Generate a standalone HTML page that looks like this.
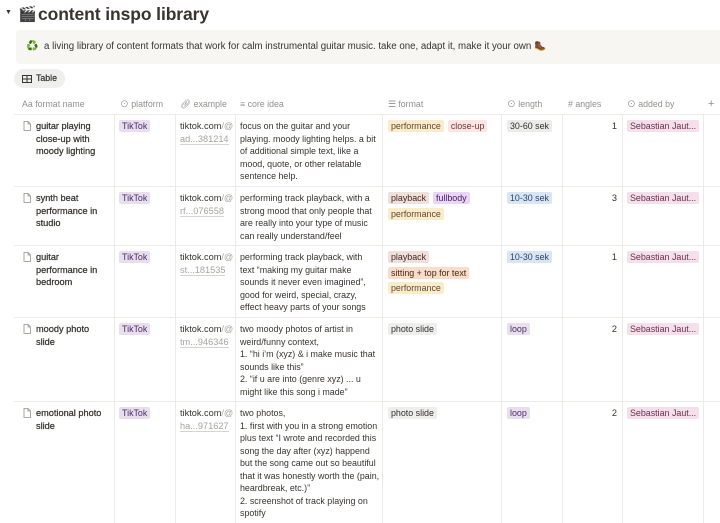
<!DOCTYPE html>
<html><head><meta charset="utf-8"><style>
*{margin:0;padding:0;box-sizing:border-box}
body{width:720px;height:523px;overflow:hidden;background:#fff;font-family:"Liberation Sans","Noto Sans CJK SC",sans-serif;color:#37352f;position:relative}
.abs{position:absolute}
.title{left:38px;top:4px;font-size:17.5px;font-weight:bold;white-space:nowrap;letter-spacing:-0.1px}
.callout{left:16px;top:30px;width:710px;height:34px;background:#f7f6f3;border-radius:4px;font-size:9.7px;line-height:34px;padding-left:28px;white-space:nowrap}
.btn{left:14px;top:69px;width:51px;height:19px;background:#efefed;border-radius:10px;font-size:8.8px;line-height:19px;padding-left:22px;-webkit-text-stroke:0.2px #37352f}
.hdr{top:95px;height:19px;font-size:8.8px;color:#91908b;line-height:19px;white-space:nowrap}
.hl{left:14px;width:706px;height:1px;background:#ebeae7}
.vl{width:1px;background:#ebeae7;top:114px;height:409px}
.cell{font-size:9.2px;line-height:12.5px;white-space:nowrap}
.ci{font-size:8.9px}
.nm{-webkit-text-stroke:0.25px #37352f}
.tg{display:flex;flex-wrap:wrap;row-gap:3.5px;column-gap:4px;align-items:flex-start}
.tag{display:block;height:12px;line-height:12px;padding:0 3px;border-radius:2px;font-size:8.9px;white-space:nowrap}
.tk{background:#e8deee;color:#492f64}
.perf{background:#f9ecc8;color:#64473a}
.cu{background:#fbe4e4;color:#6e3630}
.pb{background:#eee0da;color:#442a1e}
.fb{background:#ead4f9;color:#412454}
.sit{background:#f8ddcc;color:#49290e}
.ps{background:#eeeeed;color:#32302c}
.s3{background:#ebebea;color:#32302c}
.s1{background:#d9e5f2;color:#28456c}
.lp{background:#e8deee;color:#492f64}
.sj{background:#f4dfeb;color:#69314c}
.ex{color:#37352f}
.ex span{color:#a5a49f}
.ex .u{border-bottom:1px solid #d5d4d0}
</style></head><body>
<div class="abs" style="left:5px;top:9px;font-size:7px">▼</div>
<div class="abs" style="left:18px;top:5px;font-size:15px">🎬</div>
<div class="abs title">content inspo library</div>
<div class="abs callout"><span class="abs" style="left:10px;top:0;font-size:10px">♻️</span>a living library of content formats that work for calm instrumental guitar music. take one, adapt it, make it your own 🥾</div>
<div class="abs btn"><svg class="abs" style="left:8px;top:6px" width="10" height="8" viewBox="0 0 10 8"><rect x="0.5" y="0.5" width="9" height="7" fill="none" stroke="#37352f"/><line x1="0.5" y1="4" x2="9.5" y2="4" stroke="#37352f"/><line x1="5" y1="0.5" x2="5" y2="7.5" stroke="#37352f"/></svg>Table</div>

<div class="abs hdr" style="left:22px">Aa format name</div>
<div class="abs hdr" style="left:120px">⊙ platform</div>
<div class="abs hdr" style="left:180px">🔗︎ example</div>
<div class="abs hdr" style="left:240px">≡ core idea</div>
<div class="abs hdr" style="left:388px">☰ format</div>
<div class="abs hdr" style="left:507px">⊙ length</div>
<div class="abs hdr" style="left:568px"># angles</div>
<div class="abs hdr" style="left:627px">⊙ added by</div>
<div class="abs hdr" style="left:708px;font-size:11px">+</div>

<div class="abs hl" style="top:114px"></div>
<div class="abs hl" style="top:186px"></div>
<div class="abs hl" style="top:245px"></div>
<div class="abs hl" style="top:317px"></div>
<div class="abs hl" style="top:401px"></div>
<div class="abs vl" style="left:114px"></div>
<div class="abs vl" style="left:175px"></div>
<div class="abs vl" style="left:235px"></div>
<div class="abs vl" style="left:382px"></div>
<div class="abs vl" style="left:501px"></div>
<div class="abs vl" style="left:562px"></div>
<div class="abs vl" style="left:622px"></div>
<div class="abs vl" style="left:703px"></div>

<div class="abs cell nm" style="left:36px;top:120px">guitar playing<br>close-up with<br>moody lighting</div>
<div class="abs cell nm" style="left:36px;top:192px">synth beat<br>performance in<br>studio</div>
<div class="abs cell nm" style="left:36px;top:251px">guitar<br>performance in<br>bedroom</div>
<div class="abs cell nm" style="left:36px;top:323px">moody photo<br>slide</div>
<div class="abs cell nm" style="left:36px;top:407px">emotional photo<br>slide</div>

<svg class="abs" style="left:23px;top:121px" width="8" height="10"><path d="M1 .5h4l2.5 2.5v6.5h-6.5z M5 .5v2.5h2.5" fill="none" stroke="#91908b" stroke-width=".8"/></svg>
<svg class="abs" style="left:23px;top:193px" width="8" height="10"><path d="M1 .5h4l2.5 2.5v6.5h-6.5z M5 .5v2.5h2.5" fill="none" stroke="#91908b" stroke-width=".8"/></svg>
<svg class="abs" style="left:23px;top:252px" width="8" height="10"><path d="M1 .5h4l2.5 2.5v6.5h-6.5z M5 .5v2.5h2.5" fill="none" stroke="#91908b" stroke-width=".8"/></svg>
<svg class="abs" style="left:23px;top:324px" width="8" height="10"><path d="M1 .5h4l2.5 2.5v6.5h-6.5z M5 .5v2.5h2.5" fill="none" stroke="#91908b" stroke-width=".8"/></svg>
<svg class="abs" style="left:23px;top:408px" width="8" height="10"><path d="M1 .5h4l2.5 2.5v6.5h-6.5z M5 .5v2.5h2.5" fill="none" stroke="#91908b" stroke-width=".8"/></svg>

<div class="abs tg" style="left:119px;top:120px"><span class="tag tk">TikTok</span></div>
<div class="abs tg" style="left:119px;top:192px"><span class="tag tk">TikTok</span></div>
<div class="abs tg" style="left:119px;top:251px"><span class="tag tk">TikTok</span></div>
<div class="abs tg" style="left:119px;top:323px"><span class="tag tk">TikTok</span></div>
<div class="abs tg" style="left:119px;top:407px"><span class="tag tk">TikTok</span></div>

<div class="abs cell ex" style="left:180px;top:120px">tiktok.com<span>/@</span><br><span class="u">ad...381214</span></div>
<div class="abs cell ex" style="left:180px;top:192px">tiktok.com<span>/@</span><br><span class="u">rf...076558</span></div>
<div class="abs cell ex" style="left:180px;top:251px">tiktok.com<span>/@</span><br><span class="u">st...181535</span></div>
<div class="abs cell ex" style="left:180px;top:323px">tiktok.com<span>/@</span><br><span class="u">tm...946346</span></div>
<div class="abs cell ex" style="left:180px;top:407px">tiktok.com<span>/@</span><br><span class="u">ha...971627</span></div>

<div class="abs cell ci" style="left:240px;top:120px">focus on the guitar and your<br>playing. moody lighting helps. a bit<br>of additional simple text, like a<br>mood, quote, or other relatable<br>sentence help.</div>
<div class="abs cell ci" style="left:240px;top:192px">performing track playback, with a<br>strong mood that only people that<br>are really into your type of music<br>can really understand/feel</div>
<div class="abs cell ci" style="left:240px;top:251px">performing track playback, with<br>text “making my guitar make<br>sounds it never even imagined”,<br>good for weird, special, crazy,<br>effect heavy parts of your songs</div>
<div class="abs cell ci" style="left:240px;top:323px">two moody photos of artist in<br>weird/funny context,<br>1. “hi i’m (xyz) &amp; i make music that<br>sounds like this”<br>2. “if u are into (genre xyz) ... u<br>might like this song i made”</div>
<div class="abs cell ci" style="left:240px;top:407px">two photos,<br>1. first with you in a strong emotion<br>plus text “I wrote and recorded this<br>song the day after (xyz) happend<br>but the song came out so beautiful<br>that it was honestly worth the (pain,<br>heardbreak, etc.)”<br>2. screenshot of track playing on<br>spotify</div>

<div class="abs tg" style="left:388px;top:120px;width:112px"><span class="tag perf">performance</span><span class="tag cu">close-up</span></div>
<div class="abs tg" style="left:388px;top:192px;width:110px"><span class="tag pb">playback</span><span class="tag fb">fullbody</span><span class="tag perf">performance</span></div>
<div class="abs tg" style="left:388px;top:251px;width:110px"><span class="tag pb">playback</span><span class="tag sit">sitting + top for text</span><span class="tag perf">performance</span></div>
<div class="abs tg" style="left:388px;top:323px"><span class="tag ps">photo slide</span></div>
<div class="abs tg" style="left:388px;top:407px"><span class="tag ps">photo slide</span></div>

<div class="abs tg" style="left:507px;top:120px"><span class="tag s3">30-60 sek</span></div>
<div class="abs tg" style="left:507px;top:192px"><span class="tag s1">10-30 sek</span></div>
<div class="abs tg" style="left:507px;top:251px"><span class="tag s1">10-30 sek</span></div>
<div class="abs tg" style="left:507px;top:323px"><span class="tag lp">loop</span></div>
<div class="abs tg" style="left:507px;top:407px"><span class="tag lp">loop</span></div>

<div class="abs cell" style="left:562px;width:55px;text-align:right;top:120px">1</div>
<div class="abs cell" style="left:562px;width:55px;text-align:right;top:192px">3</div>
<div class="abs cell" style="left:562px;width:55px;text-align:right;top:251px">1</div>
<div class="abs cell" style="left:562px;width:55px;text-align:right;top:323px">2</div>
<div class="abs cell" style="left:562px;width:55px;text-align:right;top:407px">2</div>

<div class="abs tg" style="left:627px;top:120px"><span class="tag sj">Sebastian Jaut...</span></div>
<div class="abs tg" style="left:627px;top:192px"><span class="tag sj">Sebastian Jaut...</span></div>
<div class="abs tg" style="left:627px;top:251px"><span class="tag sj">Sebastian Jaut...</span></div>
<div class="abs tg" style="left:627px;top:323px"><span class="tag sj">Sebastian Jaut...</span></div>
<div class="abs tg" style="left:627px;top:407px"><span class="tag sj">Sebastian Jaut...</span></div>
</body></html>
